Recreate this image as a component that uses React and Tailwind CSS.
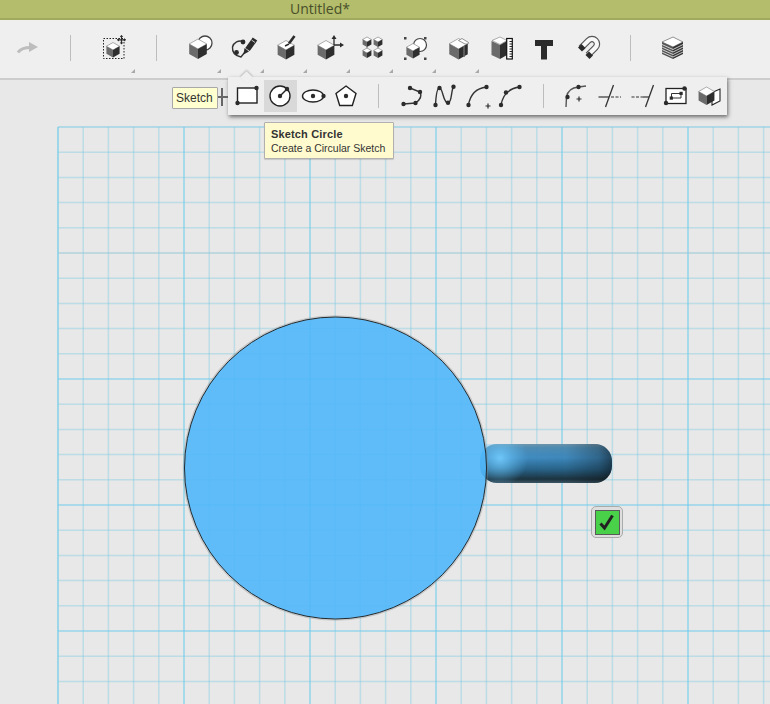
import React from "react";

const D = "#2b2b2b";

function Cube({ x, y, r, top = "#fff", left = "#6b6b6b", right = "#2e2e2e" }) {
  const w = r * 0.88;
  const h = r * 0.5;
  return (
    <g strokeLinejoin="round">
      <polygon points={`${x},${y - r} ${x + w},${y - h} ${x},${y} ${x - w},${y - h}`} fill={top} stroke="#777" strokeWidth="0.6" />
      <polygon points={`${x - w},${y - h} ${x},${y} ${x},${y + r} ${x - w},${y + h}`} fill={left} />
      <polygon points={`${x + w},${y - h} ${x},${y} ${x},${y + r} ${x + w},${y + h}`} fill={right} />
    </g>
  );
}

function Dots({ pts, r = 2.2 }) {
  return (
    <>
      {pts.map(([x, y], i) => (
        <circle key={i} cx={x} cy={y} r={r} fill={D} />
      ))}
    </>
  );
}

function Plus({ x, y, s = 3 }) {
  return <path d={`M${x - s} ${y}H${x + s}M${x} ${y - s}V${y + s}`} stroke={D} strokeWidth="1.2" fill="none" />;
}

function Ic({ children }) {
  return (
    <svg width="32" height="32" viewBox="0 0 32 32" className="block overflow-visible">
      {children}
    </svg>
  );
}

const mainIcons = {
  redo: (
    <>
      <path d="M7 21.5Q10 16.5 20 16.5" stroke="#bdbdbd" strokeWidth="3" fill="none" />
      <polygon points="18,11 27,16 18,21" fill="#bdbdbd" />
    </>
  ),
  select: (
    <>
      <rect x="5.5" y="7.5" width="20.5" height="20" fill="none" stroke="#222" strokeWidth="1" strokeDasharray="1.5 1.5" />
      <Cube x={15} y={19} r={7.5} />
      <path d="M23.5 4.5V13M19.5 8.8H27.5" stroke={D} strokeWidth="1.2" />
      <path d="M21.8 6L23.5 4L25.2 6ZM21.8 11.5L23.5 13.5L25.2 11.5ZM21 7L19 8.8L21 10.5ZM26 7L28 8.8L26 10.5Z" fill={D} />
    </>
  ),
  combine: (
    <>
      <circle cx="21" cy="12" r="7" fill="#fff" stroke="#444" strokeWidth="1.3" />
      <Cube x={14} y={18} r={10} />
    </>
  ),
  sketch: (
    <>
      <path d="M16 10.5A8 8 0 0 0 5.5 16C5 22 9 25 14 26L18 21" stroke="#333" strokeWidth="1.4" fill="none" />
      <Dots pts={[[16, 11], [9.5, 21.5]]} r={2.4} />
      <path d="M28 8L20.5 18.5" stroke={D} strokeWidth="5.5" />
      <polygon points="17.5,17 22,20.5 16.5,23.5" fill={D} />
      <path d="M24.5 9L28 11.5" stroke="#efefef" strokeWidth="0.8" />
    </>
  ),
  extrude: (
    <>
      <Cube x={16} y={19} r={9.5} />
      <path d="M24.5 5L19 12.5" stroke={D} strokeWidth="2.6" />
      <path d="M19 13L15 15" stroke={D} strokeWidth="1.5" />
    </>
  ),
  transform: (
    <>
      <Cube x={13} y={19} r={9.5} />
      <path d="M21 14V7M21 14H28" stroke={D} strokeWidth="1.3" />
      <path d="M18.5 8L21 4L23.5 8ZM27 11.5L31 14L27 16.5Z" fill={D} />
    </>
  ),
  pattern: (
    <>
      <Cube x={11} y={11} r={5} />
      <Cube x={22} y={11} r={5} />
      <path d="M11 15V18M22 15V18" stroke="#777" strokeWidth="1" />
      <Cube x={11} y={22} r={5} />
      <Cube x={22} y={22} r={5} />
    </>
  ),
  group: (
    <>
      <rect x="5" y="6" width="2.5" height="2.5" fill="#444" />
      <rect x="25" y="6" width="2.5" height="2.5" fill="#444" />
      <rect x="5" y="26.5" width="2.5" height="2.5" fill="#444" />
      <rect x="25" y="26.5" width="2.5" height="2.5" fill="#444" />
      <circle cx="21" cy="14" r="6.5" fill="#fff" stroke="#444" strokeWidth="1.2" />
      <Cube x={14} y={20} r={7.5} />
    </>
  ),
  split: (
    <>
      <Cube x={16.5} y={18} r={10.5} />
      <polygon points="20,7.5 26.5,11.5 26,13 23,13 16.5,9.5" fill="#fff" stroke="#666" strokeWidth="0.7" />
      <path d="M22 15V26" stroke="#6b6b6b" strokeWidth="1.5" />
    </>
  ),
  measure: (
    <>
      <polygon points="15,6 22,9.5 15,13.5 7,9.5" fill="#fff" stroke="#777" strokeWidth="0.6" />
      <polygon points="6.5,10 15,14 15,28 6.5,24" fill="#6b6b6b" />
      <polygon points="15,14 22,10 22,24 15,28" fill="#2e2e2e" />
      <rect x="21.7" y="7.5" width="5.6" height="20.5" fill="#fff" stroke="#111" strokeWidth="1.2" />
      <path d="M27 10.5h-2.5M27 13h-2.5M27 15.5h-2.5M27 18h-2.5M27 20.5h-2.5M27 23h-2.5M27 25.5h-2.5" stroke="#111" strokeWidth="0.9" />
    </>
  ),
  text: (
    <>
      <rect x="7" y="9" width="18" height="6" fill={D} />
      <rect x="13" y="9" width="6" height="19.5" fill={D} />
    </>
  ),
  magnet: (
    <>
      <path d="M10 17L17.5 9.5A4.8 4.8 0 0 1 24.5 16.5L17 24" stroke="#555" strokeWidth="6.5" fill="none" />
      <path d="M10 17L17.5 9.5A4.8 4.8 0 0 1 24.5 16.5L17 24" stroke="#f8f8f8" strokeWidth="4.2" fill="none" />
      <polygon points="10.5,13 14.5,17 11,20.5 7,16.5" fill={D} />
      <polygon points="18,20.5 22,24.5 18.5,28 14.5,24" fill={D} />
    </>
  ),
  layers: (
    <>
      <polygon points="17,6 27,11 17,16 6,11" fill="#fff" stroke="#666" strokeWidth="0.7" />
      <polygon points="6,11 17,16 17,28 6,23" fill="#555" />
      <polygon points="27,11 17,16 17,28 27,23" fill="#333" />
      <path d="M6 13.5L17 18.5M6 16L17 21M6 18.5L17 23.5M6 21L17 26M27 13.5L17 18.5M27 16L17 21M27 18.5L17 23.5M27 21L17 26" stroke="#eee" strokeWidth="0.8" />
    </>
  ),
};

const popupIcons = {
  rect: (
    <>
      <rect x="6.5" y="8" width="19.5" height="15" fill="#fff" stroke="#222" strokeWidth="1.4" />
      <Dots pts={[[25.5, 8], [6.5, 23]]} />
    </>
  ),
  circle: (
    <>
      <circle cx="16" cy="16" r="10" fill="#fff" stroke="#222" strokeWidth="1.4" />
      <path d="M16 16L23 9" stroke="#222" strokeWidth="1.4" />
      <Dots pts={[[16, 16], [23, 9]]} />
    </>
  ),
  ellipse: (
    <>
      <ellipse cx="16" cy="16" rx="10.5" ry="6" fill="#fff" stroke="#222" strokeWidth="1.4" />
      <Dots pts={[[16, 16], [26.5, 16]]} />
    </>
  ),
  pentagon: (
    <>
      <polygon points="16,6 26,13.5 22.3,25.5 9.7,25.5 6,13.5" fill="#fff" stroke="#222" strokeWidth="1.4" />
      <Dots pts={[[16, 16]]} />
    </>
  ),
  poly: (
    <>
      <path d="M8.5 24L20.5 23Q28 18 25 12L15 8" stroke="#333" strokeWidth="1.4" fill="none" />
      <Dots pts={[[15, 8], [25, 12], [20.5, 23], [8.5, 24]]} />
    </>
  ),
  spline: (
    <>
      <path d="M7.5 25C8 15 9 8 11.5 8C15 8 15 23 20 23C24 23 23 10 25.5 7" stroke="#333" strokeWidth="1.4" fill="none" />
      <Dots pts={[[7.5, 25], [11.5, 8], [20, 22.7], [25.5, 6.7]]} />
    </>
  ),
  arcPlus: (
    <>
      <path d="M7.5 25Q10 9 25.5 7" stroke="#333" strokeWidth="1.4" fill="none" />
      <Dots pts={[[7.5, 25], [25.5, 7]]} />
      <Plus x={27} y={26} s={2.5} />
    </>
  ),
  arc: (
    <>
      <path d="M7 25Q10 9 25.5 7" stroke="#333" strokeWidth="1.4" fill="none" />
      <Dots pts={[[7, 25], [12, 12.5], [25.5, 7]]} />
    </>
  ),
  fillet: (
    <>
      <path d="M7 27L7.5 17Q9 8 19.5 7L27 6" stroke="#555" strokeWidth="1.4" fill="none" />
      <Dots pts={[[8.5, 17], [19.5, 7]]} />
      <Plus x={20} y={19} s={2.5} />
    </>
  ),
  trim: (
    <>
      <path d="M6.5 17H17" stroke="#333" strokeWidth="1.2" />
      <path d="M19 17H29" stroke="#333" strokeWidth="1.2" strokeDasharray="3 1.5" />
      <path d="M21.5 5L13.5 27" stroke="#333" strokeWidth="1.3" />
    </>
  ),
  extend: (
    <>
      <path d="M6.5 17H18" stroke="#333" strokeWidth="1.2" strokeDasharray="3 1.5" />
      <path d="M18 17H24" stroke="#333" strokeWidth="1.2" />
      <path d="M28.5 5L20.5 27" stroke="#333" strokeWidth="1.3" />
    </>
  ),
  offset: (
    <>
      <rect x="8" y="8.5" width="20" height="15" fill="#fff" stroke="#222" strokeWidth="1.3" />
      <path d="M13.5 18V13.5H23V18Z" fill="none" stroke="#333" strokeWidth="1" />
      <rect x="11.7" y="16.5" width="3.2" height="3.2" fill={D} />
      <rect x="21.5" y="11.8" width="3.2" height="3.2" fill={D} />
      <Dots pts={[[26.5, 8.5], [8, 23]]} />
    </>
  ),
  project: (
    <>
      <polygon points="21,12.5 29,9 29,21 21,25" fill="#fff" stroke="#222" strokeWidth="1.1" />
      <Cube x={15.5} y={16} r={9} />
    </>
  ),
};

function Sep({ className = "" }) {
  return <div className={`w-px bg-[#bdbdbd] ${className}`} />;
}

function Tool({ icon, arrow, className = "" }) {
  return (
    <div className={`relative w-[43px] h-[53px] pl-[5px] pt-[11px] ${className}`}>
      <Ic>{mainIcons[icon]}</Ic>
      {arrow && (
        <span className="absolute right-[1px] bottom-0 w-0 h-0 border-l-[4px] border-l-transparent border-b-[4px] border-b-[#a8a8a8]" />
      )}
    </div>
  );
}

function PopTool({ icon, active }) {
  return (
    <div className={`w-[33px] h-[32px] flex justify-start items-center shrink-0 ${active ? "bg-[#d9d9d9]" : ""}`}>
      <Ic>{popupIcons[icon]}</Ic>
    </div>
  );
}

const MINOR = 126 / 5;
const xs = Array.from({ length: 29 }, (_, i) => 58 + i * MINOR);
const ys = Array.from({ length: 24 }, (_, i) => 127 + i * MINOR);

function Scene() {
  return (
    <svg width="770" height="624" viewBox="0 80 770 624" className="block">
      <defs>
        <linearGradient id="cylV" x1="0" y1="0" x2="0" y2="1">
          <stop offset="0" stopColor="#6d97b0" />
          <stop offset="0.1" stopColor="#4a8db8" />
          <stop offset="0.35" stopColor="#3c8cc4" />
          <stop offset="0.65" stopColor="#24628a" />
          <stop offset="0.9" stopColor="#172f3c" />
          <stop offset="1" stopColor="#3a5564" />
        </linearGradient>
        <linearGradient id="cylH" x1="0" y1="0" x2="1" y2="0">
          <stop offset="0" stopColor="#000" stopOpacity="0" />
          <stop offset="0.65" stopColor="#000" stopOpacity="0.05" />
          <stop offset="0.9" stopColor="#000" stopOpacity="0.3" />
          <stop offset="1" stopColor="#000" stopOpacity="0.55" />
        </linearGradient>
        <radialGradient id="cylGlow" cx="500" cy="458" r="28" gradientUnits="userSpaceOnUse">
          <stop offset="0" stopColor="#70ccff" stopOpacity="0.9" />
          <stop offset="1" stopColor="#5ab8f0" stopOpacity="0" />
        </radialGradient>
      </defs>
      {xs.map((x, i) => (
        <line
          key={`v${i}`}
          x1={x}
          x2={x}
          y1={127}
          y2={704}
          stroke={i === 0 ? "#82d2ea" : i % 5 === 0 ? "#a6d9ea" : "#7fcbe3"}
          strokeWidth={i === 0 ? 1.5 : i % 5 === 0 ? 2 : 1.5}
          strokeOpacity={i === 0 || i % 5 === 0 ? 1 : 0.42}
        />
      ))}
      {ys.map((y, i) => (
        <line
          key={`h${i}`}
          x1={58}
          x2={770}
          y1={y}
          y2={y}
          stroke={i === 0 ? "#7cc9e3" : i === 5 ? "#96c8d8" : i % 5 === 0 ? "#6ecbec" : "#7fcbe3"}
          strokeWidth={i % 5 === 0 ? 1 : 1.5}
          strokeOpacity={i % 5 === 0 ? 1 : 0.42}
        />
      ))}
      <g opacity="0.97">
        <rect x="480" y="444" width="132" height="39" rx="17" fill="url(#cylV)" />
        <rect x="480" y="444" width="132" height="39" rx="17" fill="url(#cylH)" />
        <rect x="480" y="444" width="60" height="39" fill="url(#cylGlow)" />
      </g>
      <circle cx="335.5" cy="468" r="152" fill="none" stroke="#888" strokeOpacity="0.35" strokeWidth="1.5" />
      <circle cx="335.5" cy="468" r="151" fill="#50b7fa" fillOpacity="0.9" stroke="#1f2a30" strokeWidth="1" />
    </svg>
  );
}

export default function App() {
  return (
    <div className="relative w-[770px] h-[704px] overflow-hidden bg-[#e8e8e8] font-['Liberation_Sans',Arial,sans-serif]">
      <div className="h-5 bg-[#b3bd6b] border-b-2 border-b-[#a0a95c] flex justify-center items-center">
        <span className="text-[14px] leading-[18px] text-[#494f2a] font-['Open_Sans','Liberation_Sans',sans-serif] mr-[130px]">Untitled*</span>
      </div>

      <div className="h-[60px] bg-[#efefef] border-b-2 border-b-[#cdcdcd] flex items-start pl-[6px]">
        <Tool icon="redo" />
        <Sep className="ml-[21px] mt-[15px] h-[26px]" />
        <Tool icon="select" arrow className="ml-[22px]" />
        <Sep className="ml-[20px] mt-[15px] h-[26px]" />
        <Tool icon="combine" arrow className="ml-[22px]" />
        <Tool icon="sketch" arrow />
        <Tool icon="extrude" arrow />
        <Tool icon="transform" arrow />
        <Tool icon="pattern" arrow />
        <Tool icon="group" arrow />
        <Tool icon="split" arrow />
        <Tool icon="measure" />
        <Tool icon="text" />
        <Tool icon="magnet" />
        <Sep className="ml-[21px] mt-[15px] h-[26px]" />
        <Tool icon="layers" className="ml-[20px]" />
      </div>

      <Scene />

      <div className="absolute left-[591px] top-[506px] w-[32px] h-[32px] rounded-[5px] bg-[#dedede] border border-[#ababab] flex items-center justify-center">
        <div className="w-[25px] h-[25px] bg-[#49d149] border border-[#5a5a5a] flex items-center justify-center">
          <svg width="20" height="20" viewBox="0 0 20 20">
            <path d="M3.5 11.5L7.5 16L15.5 3.5" fill="none" stroke="#222" strokeWidth="3" />
          </svg>
        </div>
      </div>

      <div className="absolute left-[228px] top-[77px] h-[38px] w-[499px] bg-[#efefef] shadow-[1px_2px_4px_rgba(0,0,0,0.55)] flex items-center pl-[3px]">
        <span className="absolute left-[14px] -top-[4px] w-[9px] h-[9px] rotate-45 bg-[#efefef] shadow-[-1px_-1px_2px_rgba(0,0,0,0.2)]" />
        <div className="relative flex items-center">
          <PopTool icon="rect" />
          <PopTool icon="circle" active />
          <PopTool icon="ellipse" />
          <PopTool icon="pentagon" />
          <Sep className="ml-[15px] h-[24px]" />
          <div className="ml-[16px] flex">
            <PopTool icon="poly" />
            <PopTool icon="spline" />
            <PopTool icon="arcPlus" />
            <PopTool icon="arc" />
          </div>
          <Sep className="ml-[16px] h-[24px]" />
          <div className="ml-[15px] flex">
            <PopTool icon="fillet" />
            <PopTool icon="trim" />
            <PopTool icon="extend" />
            <PopTool icon="offset" />
            <PopTool icon="project" />
          </div>
        </div>
      </div>

      <div className="absolute left-[172px] top-[87px] w-[46px] h-[22px] bg-[#ffffcf] border border-[#a8a8a8] rounded-[1px] text-[12px] leading-[20px] text-[#333] pl-[3px]">
        Sketch
      </div>
      <div className="absolute left-[218px] top-[96px] w-[10px] h-[2px] bg-[#666]" />
      <div className="absolute left-[221px] top-[88px] w-[2px] h-[18px] bg-[#666]" />

      <div className="absolute left-[264px] top-[122px] w-[130px] h-[37px] bg-[#fffbcf] border border-[#b0b0b0] rounded-[1px] shadow-[0_1px_1px_rgba(0,0,0,0.15)] pl-[6px] pt-[4px] text-[10.5px] leading-[14px] text-[#333] whitespace-nowrap">
        <div className="font-bold text-[11px] tracking-[0.15px]">Sketch Circle</div>
        <div>Create a Circular Sketch</div>
      </div>
    </div>
  );
}
